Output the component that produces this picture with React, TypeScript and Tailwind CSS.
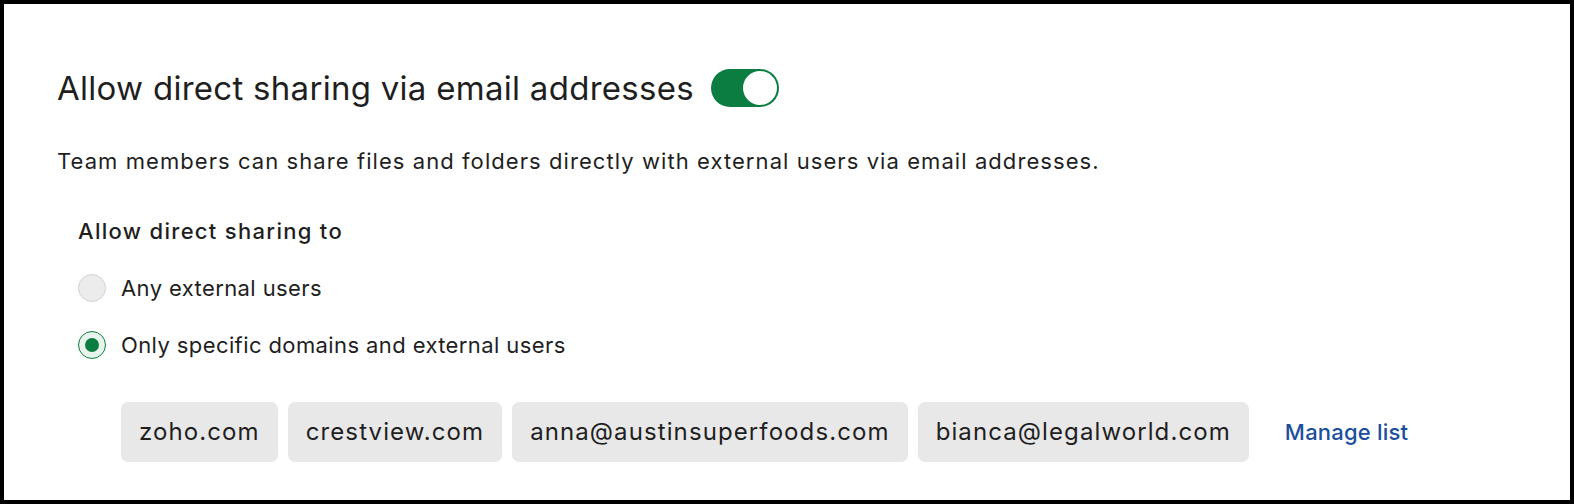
import { useState } from 'react'

const chips = ['zoho.com', 'crestview.com', 'anna@austinsuperfoods.com', 'bianca@legalworld.com']

export default function App() {
  const [enabled, setEnabled] = useState(true)
  const [choice, setChoice] = useState<'any' | 'specific'>('specific')

  return (
    <div
      className="h-[504px] w-[1574px] border-4 border-black bg-white text-[#1f1f1f]"
      style={{ fontFamily: 'Inter, "Noto Sans", sans-serif' }}
    >
      <div className="pl-[53px] pt-[65px]">
        <div className="flex items-center gap-[17px]">
          <h1 className="text-[33px] leading-[38px] tracking-[0.28px]">Allow direct sharing via email addresses</h1>
          <button
            type="button"
            onClick={() => setEnabled(!enabled)}
            className={`flex h-[38px] w-[68px] items-center rounded-full p-[2px] ${enabled ? 'justify-end bg-[#0b7d41]' : 'justify-start bg-gray-300'}`}
          >
            <span className="h-[34px] w-[34px] rounded-full bg-white" />
          </button>
        </div>

        <p className="mt-[40px] text-[22px] leading-[28px] tracking-[1.07px]">
          Team members can share files and folders directly with external users via email addresses.
        </p>

        <div className="pl-[21px]">
          <div className="mt-[42px] text-[22px] font-medium leading-[28px] tracking-[1.3px]">Allow direct sharing to</div>

          <div className="mt-[29px] flex flex-col gap-[29px]">
            <label className="flex cursor-pointer items-center gap-[15px]" onClick={() => setChoice('any')}>
              <Radio checked={choice === 'any'} />
              <span className="text-[22px] leading-[28px] tracking-[0.4px]">Any external users</span>
            </label>
            <label className="flex cursor-pointer items-center gap-[15px]" onClick={() => setChoice('specific')}>
              <Radio checked={choice === 'specific'} />
              <span className="text-[22px] leading-[28px] tracking-[0.4px]">Only specific domains and external users</span>
            </label>
          </div>

          <div className="mt-[43px] flex items-center gap-[10px] pl-[43px]">
            {chips.map((c) => (
              <span key={c} className="flex h-[60px] items-center rounded-[7px] bg-[#e8e8e8] px-[18px] text-[24px] tracking-[1.1px]">
                {c}
              </span>
            ))}
            <a href="#" className="ml-[26px] text-[22px] font-medium tracking-[0.2px] text-[#1b4f9e]">
              Manage list
            </a>
          </div>
        </div>
      </div>
    </div>
  )
}

function Radio({ checked }: { checked: boolean }) {
  return checked ? (
    <span className="flex h-[28px] w-[28px] items-center justify-center rounded-full border border-[#0b7d41] bg-[#e7f3ec]">
      <span className="h-[14px] w-[14px] rounded-full bg-[#0b7d41]" />
    </span>
  ) : (
    <span className="h-[28px] w-[28px] rounded-full border border-[#d4d4d4] bg-[#ececec]" />
  )
}
